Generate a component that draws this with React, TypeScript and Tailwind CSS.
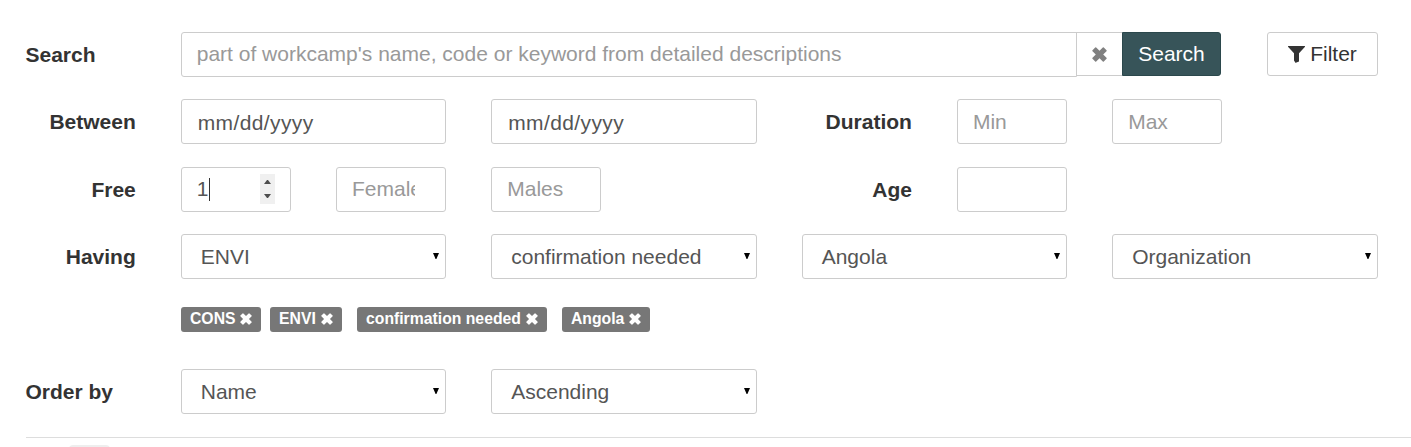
import type { ReactNode } from "react";

function Times({ className }: { className: string }) {
  return (
    <svg viewBox="0 0 15 15" className={className} fill="currentColor">
      <path d="M3.2.5a.7.7 0 0 1 1 0L7.5 3.8 10.8.5a.7.7 0 0 1 1 0l2.7 2.7a.7.7 0 0 1 0 1L11.2 7.5l3.3 3.3a.7.7 0 0 1 0 1l-2.7 2.7a.7.7 0 0 1-1 0L7.5 11.2l-3.3 3.3a.7.7 0 0 1-1 0L.5 11.8a.7.7 0 0 1 0-1L3.8 7.5.5 4.2a.7.7 0 0 1 0-1z" />
    </svg>
  );
}

function Funnel({ className }: { className: string }) {
  return (
    <svg viewBox="0 0 17 17" className={className} fill="currentColor">
      <path d="M.6 0h15.8a.5.5 0 0 1 .4.9L11 7.2v8.3l-3.2 1.2a.5.5 0 0 1-.7-.5L6 14.6V7.2L.2.9A.5.5 0 0 1 .6 0z" />
    </svg>
  );
}

function Row({ children, className = "" }: { children: ReactNode; className?: string }) {
  return <div className={`grid h-[45px] grid-cols-9 gap-x-[45px] ${className}`}>{children}</div>;
}

function Label({ children, className = "text-right" }: { children: ReactNode; className?: string }) {
  return <label className={`font-bold leading-[45px] whitespace-nowrap text-[#333] ${className}`}>{children}</label>;
}

function TextInput({ placeholder = "", className = "pb-px" }: { placeholder?: string; className?: string }) {
  return (
    <input
      type="text"
      placeholder={placeholder}
      className={`h-[45px] w-full min-w-0 rounded-[3px] border border-[#ccc] bg-white px-[15px] text-[#555] outline-none placeholder:text-[#999] ${className}`}
    />
  );
}

function DateField() {
  return (
    <div className="col-span-2 h-[45px] rounded-[3px] border border-[#ccc] px-4 pt-px leading-[43px] tracking-[0.38px] text-[#555]">
      mm/dd/yyyy
    </div>
  );
}

function Picker({ value }: { value: string }) {
  return (
    <button
      type="button"
      className="col-span-2 flex h-[45px] items-center justify-between rounded-[3px] border border-[#ccc] bg-white pr-[6px] pl-[19px] text-[#555]"
    >
      <span className="pt-px">{value}</span>
      <svg viewBox="0 0 6 6" className="mb-px h-[6px] w-[6px] fill-black">
        <path d="M0 0H6L3.4 6H2.6Z" />
      </svg>
    </button>
  );
}

function Tag({ label, className = "" }: { label: string; className?: string }) {
  return (
    <span className={`flex h-[25px] items-center justify-between rounded-[3px] bg-[#777] pr-[9px] pl-[9px] text-[15.75px] font-bold text-white ${className}`}>
      <span className="pb-px">{label}</span>
      <Times className="mb-px h-[12px] w-[12px]" />
    </span>
  );
}

export default function App() {
  return (
    <main className="h-[447px] overflow-hidden bg-white pl-[25.5px] font-['Liberation_Sans',Arial,sans-serif] text-[21px] leading-[30px] text-[#333]">
      <form className="w-[1352.16px] pt-8">
        <Row>
          <Label className="text-left">Search</Label>
          <div className="col-span-7 mr-[1.4px] flex">
            <TextInput
              placeholder="part of workcamp's name, code or keyword from detailed descriptions"
              className="flex-1 rounded-r-none pb-px"
            />
            <button type="button" aria-label="Clear" className="-ml-px flex h-11 w-[46px] items-center justify-center border border-r-0 border-[#ccc] text-[#808080]">
              <Times className="h-[15px] w-[15px]" />
            </button>
            <button type="button" className="h-11 w-[99px] rounded-r-[3px] border border-[#2b484c] bg-[#375459] text-white">
              Search
            </button>
          </div>
          <button type="button" className="flex h-11 items-center justify-center rounded-[3px] border border-[#ccc]">
            <Funnel className="mt-px mr-[5px] h-[17px] w-[17px]" />
            Filter
          </button>
        </Row>

        <Row className="mt-[22px]">
          <Label>Between</Label>
          <DateField />
          <DateField />
          <Label>Duration</Label>
          <TextInput placeholder="Min" className="pt-px" />
          <TextInput placeholder="Max" className="pt-px" />
        </Row>

        <Row className="mt-[23px]">
          <Label>Free</Label>
          <div className="flex h-[45px] items-center justify-between rounded-[3px] border border-[#ccc] pr-[15px] pb-px pl-[15px] text-[#555]">
            <span className="flex items-center">
              <span>1</span>
              <span className="ml-[0.5px] h-[23px] w-px bg-[#333]" />
            </span>
            <svg viewBox="0 0 15 30" className="h-[30px] w-[15px]">
              <path fill="#f0f0f0" d="M0 0h15v30H0z" />
              <path fill="#4d4d4d" d="M4 10h7L8 6H7zM4 20h7l-3 4H7z" />
            </svg>
          </div>
          <div className="flex h-[45px] items-center rounded-[3px] border border-[#ccc] px-[15px] text-[#999]">
            <span className="mr-[15px] overflow-hidden pb-px">Females</span>
          </div>
          <TextInput placeholder="Males" />
          <Label className="col-start-6 text-right">Age</Label>
          <TextInput />
        </Row>

        <Row className="mt-[22px]">
          <Label>Having</Label>
          <Picker value="ENVI" />
          <Picker value="confirmation needed" />
          <Picker value="Angola" />
          <Picker value="Organization" />
        </Row>

        <div className="mt-7 ml-[155.5px] flex">
          <Tag label="CONS" className="w-20" />
          <Tag label="ENVI" className="ml-[9px] w-[72px]" />
          <Tag label="confirmation needed" className="ml-[15px] w-[190px]" />
          <Tag label="Angola" className="ml-[15px] w-[88px]" />
        </div>

        <Row className="mt-[37px]">
          <Label className="text-left">Order by</Label>
          <Picker value="Name" />
          <Picker value="Ascending" />
        </Row>
      </form>
      <div className="mt-[23px] border-t border-[#ddd] pt-[7px]">
        <div className="ml-[43px] h-8 w-[41px] rounded-[4px] bg-[#eee]" />
      </div>
    </main>
  );
}
